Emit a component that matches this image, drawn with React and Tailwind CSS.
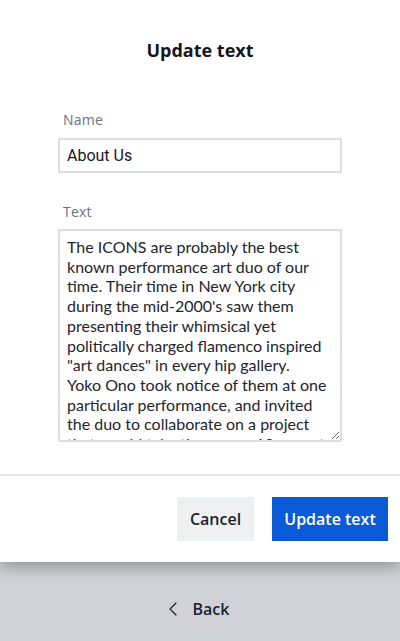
import { ChevronLeft } from "lucide-react";

// NBSP between "Yoko" and "Ono" keeps the name together, as in the reference wrap
const BODY =
  "The ICONS are probably the best known performance art duo of our time. Their time in New York city during the mid-2000's saw them presenting their whimsical yet politically charged flamenco inspired \"art dances\" in every hip gallery. Yoko\u00a0Ono took notice of them at one particular performance, and invited the duo to collaborate on a project that would take them over 10 years to complete.";

export default function App() {
  return (
    <div className="min-h-screen bg-[#d1d2d7] font-['Open_Sans',sans-serif] text-[#1b1f33]">
      {/* Modal */}
      <div className="bg-white shadow-[0_6px_14px_rgba(0,0,0,0.28)] relative">
        <h1 className="pt-[38px] text-center text-[18px] font-bold leading-6 text-[#15171f]">Update text</h1>

        <div className="px-[58px] pt-[48px]">
          <label className="block pl-[5px] text-[14px] tracking-[0.2px] text-[#6e7080] leading-5">Name</label>
          <input
            defaultValue="About Us"
            className="mt-[8px] block w-full h-[35px] border-2 border-[#dcdce3] px-[7px] text-[16px] font-['Roboto',sans-serif] text-[#15171f] outline-none"
          />

          <label className="mt-[29px] block pl-[5px] text-[14px] tracking-[0.2px] text-[#6e7080] leading-5">Text</label>
          <textarea
            defaultValue={BODY}
            className="mt-[7px] block w-full h-[213px] border-2 border-[#dcdce3] pl-[7px] pr-[5px] pt-[6px] text-[16px] leading-[19.7px] font-['Lato',sans-serif] text-[#23252f] overflow-hidden outline-none"
          />
        </div>

        <div className="mt-[32px] border-t-2 border-[#e6e6ea]" />

        <div className="flex justify-end gap-[18px] pt-[21px] pb-[21px] pr-[12px]">
          <button className="h-[44px] w-[77px] bg-[#eff0f2] text-[16px] font-semibold text-[#1b1f33]">Cancel</button>
          <button className="h-[44px] w-[116px] bg-[#0b5ad8] text-[16px] font-semibold text-white">Update text</button>
        </div>
      </div>

      {/* Back */}
      <div className="flex items-center justify-center gap-[8px] pt-[35px] pr-[10px]">
        <ChevronLeft className="w-[24px] h-[24px] text-[#1b1f33]" strokeWidth={1.2} />
        <span className="text-[16px] font-semibold">Back</span>
      </div>
    </div>
  );
}
